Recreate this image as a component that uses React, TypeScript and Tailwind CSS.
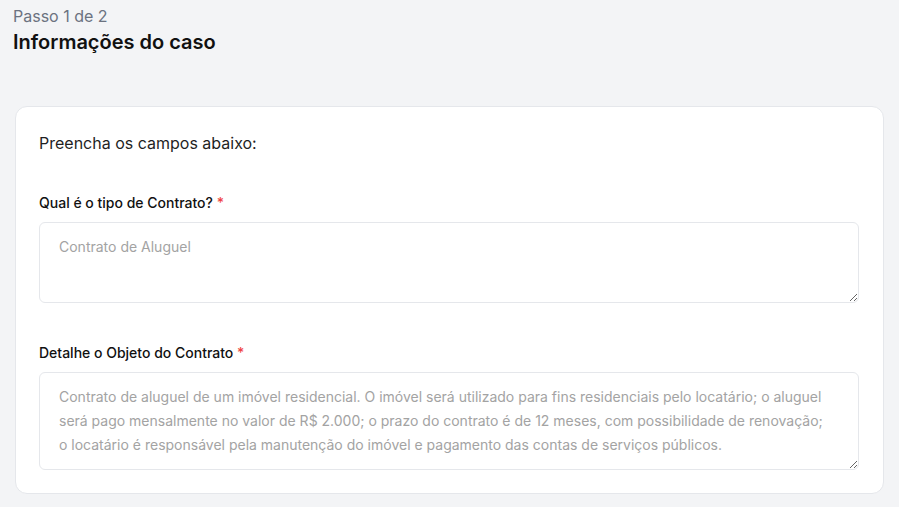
export default function App() {
  return (
    <div
      className="min-h-screen bg-[#f3f4f6] px-[15px] pt-1 pb-4 text-[#111827]"
      style={{ fontFamily: 'Inter, "Noto Sans", sans-serif' }}
    >
      <div className="-ml-[2px]">
        <p className="text-base leading-6 text-[#6b7280]">Passo 1 de 2</p>
        <h1 className="text-xl font-semibold leading-7 text-[#111111]">Informações do caso</h1>
      </div>

      <div className="mt-[50px] rounded-xl border border-[#e5e7eb] bg-white pl-[23px] pr-6 pt-6 pb-[23px]">
        <p className="text-base leading-6 text-[#1f1f1f]">Preencha os campos abaixo:</p>

        <label className="mt-[38px] block text-sm font-medium leading-5 text-[#111111]">
          Qual é o tipo de Contrato? <span className="text-[#ef4444]">*</span>
        </label>
        <textarea
          className="mt-[9px] block h-[81px] w-full rounded-md border border-[#e5e7eb] bg-white pl-[19px] pr-[24px] py-3 text-sm leading-6 outline-none placeholder:text-[#a3a3a3]"
          placeholder="Contrato de Aluguel"
        />

        <label className="mt-[40px] block text-sm font-medium leading-5 text-[#111111]">
          Detalhe o Objeto do Contrato <span className="text-[#ef4444]">*</span>
        </label>
        <textarea
          className="mt-[9px] block h-[98px] w-full rounded-md border border-[#e5e7eb] bg-white pl-[19px] pr-[24px] py-3 text-sm leading-6 outline-none placeholder:text-[#a3a3a3]"
          placeholder="Contrato de aluguel de um imóvel residencial. O imóvel será utilizado para fins residenciais pelo locatário; o aluguel será pago mensalmente no valor de R$ 2.000; o prazo do contrato é de 12 meses, com possibilidade de renovação; o locatário é responsável pela manutenção do imóvel e pagamento das contas de serviços públicos."
        />
      </div>
    </div>
  );
}
